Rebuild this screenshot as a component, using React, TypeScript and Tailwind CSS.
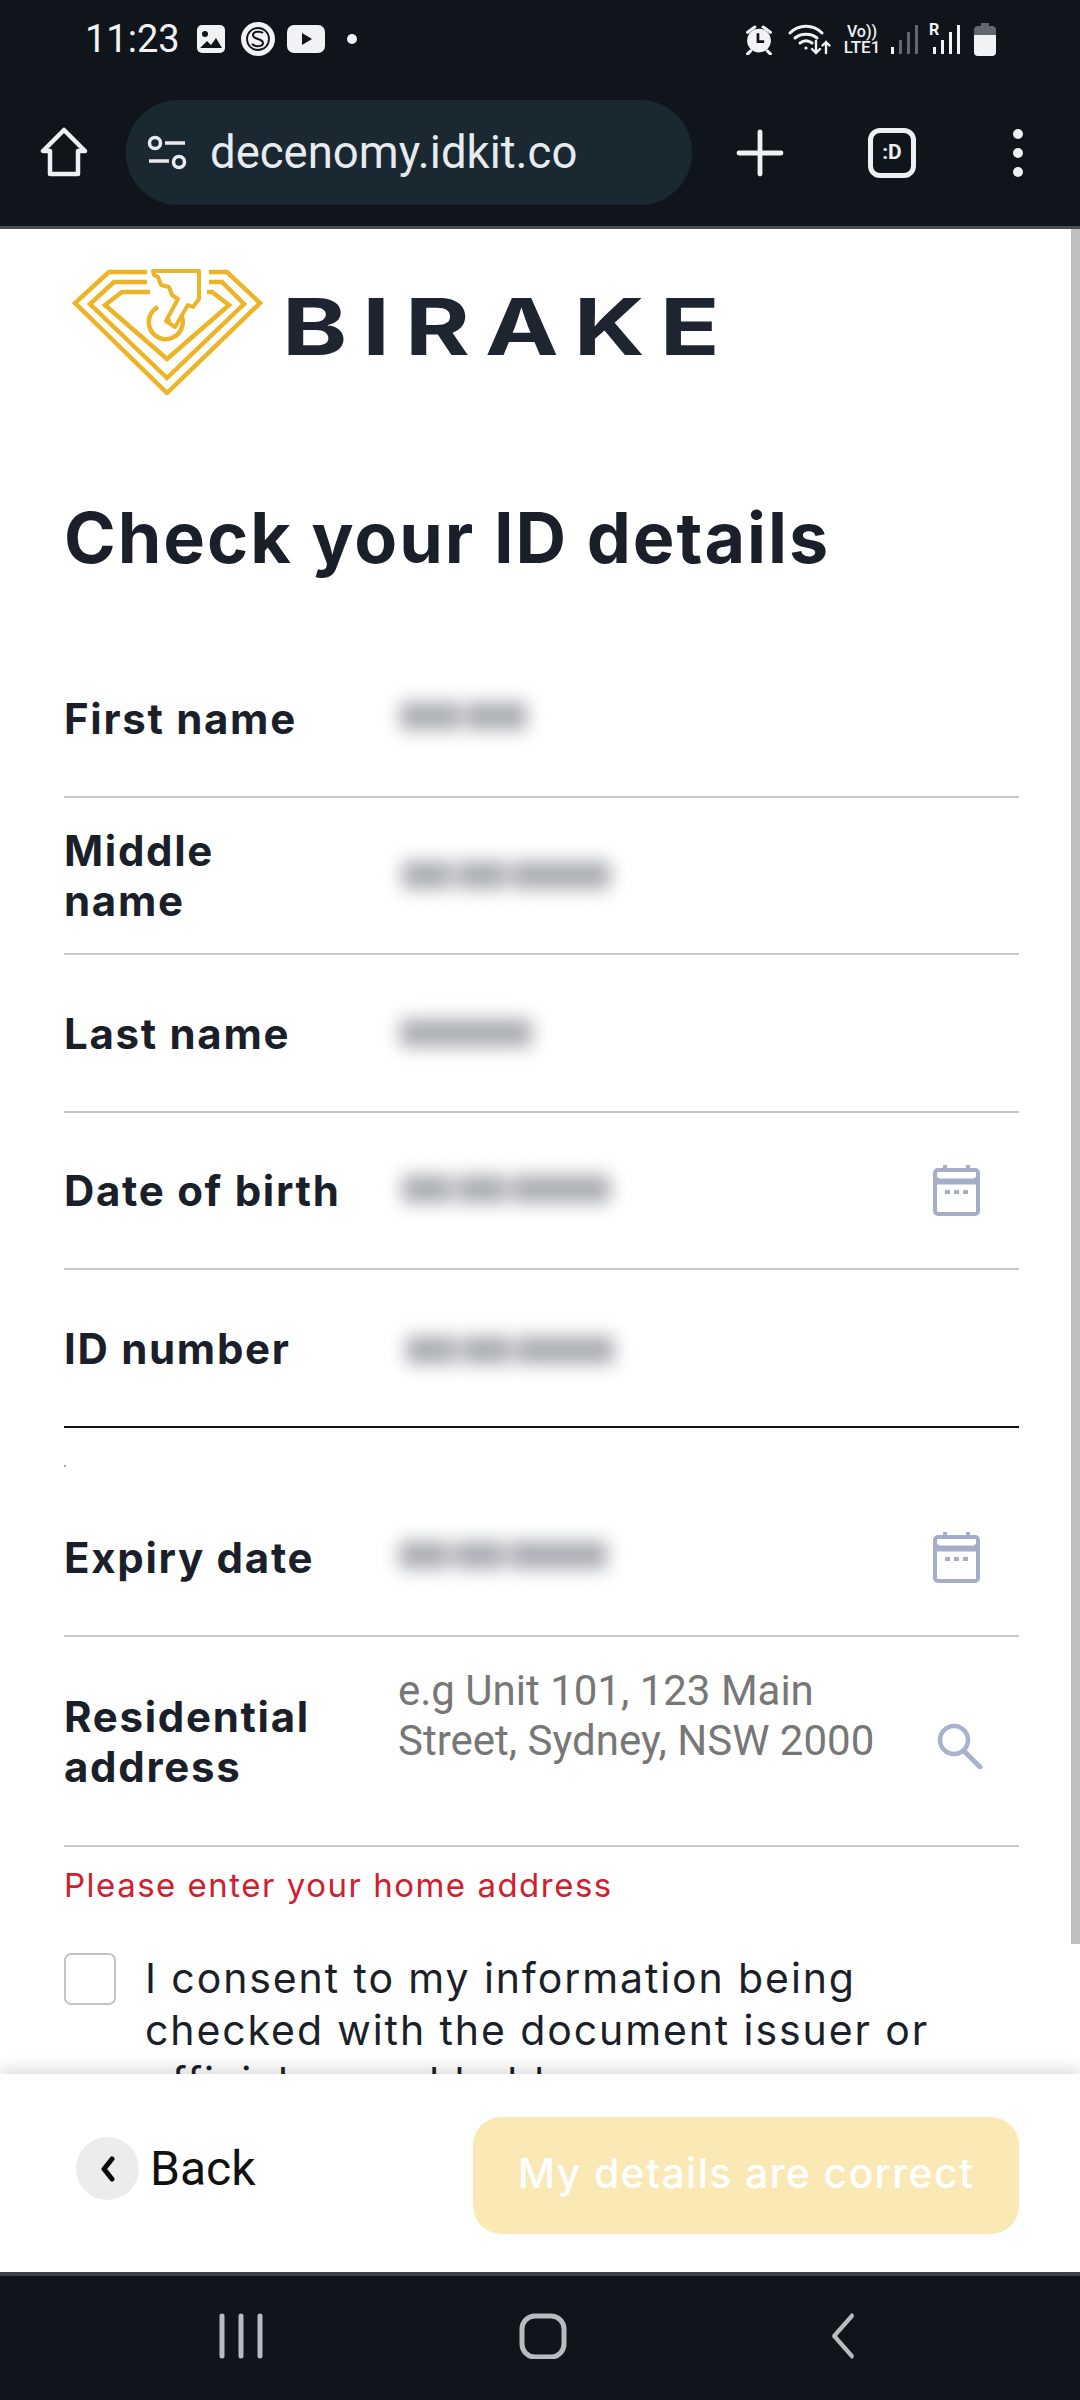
import React from "react";
import { Plus } from "lucide-react";

const labelClass =
  "mt-[2px] font-['Inter',sans-serif] font-bold text-[42px] leading-[50px] tracking-[1.7px] text-[#1a1f29]";

const StatusIcons: React.FC = () => (
  <div className="flex items-center">
    {/* alarm */}
    <svg className="-ml-[2px]" width="32" height="31" viewBox="0 0 30 30" fill="#f1f2f3">
      <circle cx="15" cy="16" r="11.5" />
      <path d="M11 3 4 8M19 3l7 5M7 26l-3 3M23 26l3 3" stroke="#f1f2f3" strokeWidth="3" strokeLinecap="round" />
      <path d="M14 9v8h6" fill="none" stroke="#10151b" strokeWidth="2.6" />
    </svg>
    {/* wifi */}
    <svg className="ml-[13px]" width="43" height="32" viewBox="0 0 43 32" fill="none" stroke="#f1f2f3" strokeWidth="3" strokeLinecap="round">
      <path d="M2 10C11 1 25 1 34 10" />
      <path d="M7 15c6-5 16-5 22 0" />
      <path d="M12 20c4-3 8-3 12 0" />
      <circle cx="18" cy="25" r="1.6" fill="#f1f2f3" stroke="none" />
      <path d="M28 18v12m-4-4 4 4 4-4M38 30V19m-3.500 3.500L38 19l3.500 3.500" strokeWidth="2.400" />
    </svg>
    <div className="ml-[11px] flex w-[40px] flex-col items-center font-['Roboto',sans-serif] font-medium text-[#f1f2f3]">
      <span className="text-[16px] leading-[15px]">Vo))</span>
      <span className="text-[17px] leading-[16px]">LTE1</span>
    </div>
    <div className="ml-[9px] flex h-[30px] items-end gap-[5px]">
      <div className="h-[7px] w-[3px] bg-[#f1f2f3]" />
      <div className="h-[14px] w-[3px] bg-[#62676c]" />
      <div className="h-[22px] w-[3px] bg-[#62676c]" />
      <div className="h-[29px] w-[3px] bg-[#62676c]" />
    </div>
    <div className="relative ml-[11px] flex h-[30px] w-[31px] items-end justify-end gap-[5px]">
      <span className="absolute left-0 top-[-3px] font-['Roboto',sans-serif] text-[16px] font-bold leading-[18px] text-[#f1f2f3]">R</span>
      <div className="h-[7px] w-[3px] bg-[#f1f2f3]" />
      <div className="h-[14px] w-[3px] bg-[#f1f2f3]" />
      <div className="h-[22px] w-[3px] bg-[#f1f2f3]" />
      <div className="h-[29px] w-[3px] bg-[#f1f2f3]" />
    </div>
    {/* battery */}
    <svg className="ml-[14px]" width="22" height="33" viewBox="0 0 22 33">
      <path d="M7 0h8v3h3a4 4 0 0 1 4 4v5H0V7a4 4 0 0 1 4-4h3z" fill="#62676c" />
      <path d="M0 12h22v17a4 4 0 0 1-4 4H4a4 4 0 0 1-4-4z" fill="#f1f2f3" />
    </svg>
  </div>
);

const StatusBar: React.FC = () => (
  <div className="flex h-[78px] items-center justify-between pl-[85px] pr-[84px]">
    <div className="flex items-center">
      <span className="font-['Roboto',sans-serif] text-[38px] leading-[40px] text-[#f1f2f3]">11:23</span>
      <svg className="ml-[17px]" width="28" height="28" viewBox="0 0 28 28">
        <rect width="28" height="28" rx="5" fill="#f1f2f3" />
        <circle cx="8" cy="9" r="3" fill="#10151b" />
        <path d="m3 23 7-7 4 4 5-7 6 10z" fill="#10151b" />
      </svg>
      <svg className="ml-[16px]" width="34" height="34" viewBox="0 0 34 34">
        <circle cx="17" cy="17" r="17" fill="#f1f2f3" />
        <circle cx="17" cy="17" r="11" fill="none" stroke="#10151b" strokeWidth="1.800" />
        <path d="M22 11c-2-2-10-2-10 2 0 5 10 3 10 8 0 4-8 4-11 1" fill="none" stroke="#10151b" strokeWidth="2" />
      </svg>
      <svg className="ml-[12px]" width="38" height="28" viewBox="0 0 38 28">
        <rect width="38" height="28" rx="7" fill="#f1f2f3" />
        <path d="M15 8v12l10-6z" fill="#10151b" />
      </svg>
      <div className="ml-[22px] h-[10px] w-[10px] rounded-full bg-[#f1f2f3]" />
    </div>
    <StatusIcons />
  </div>
);

const Toolbar: React.FC = () => (
  <div className="flex h-[148px] items-start pl-[40px] pt-[22px]">
    <svg className="mt-[27px]" width="48" height="50" viewBox="0 0 48 50" fill="none" stroke="#eef0f1" strokeWidth="4.500" strokeLinejoin="round">
      <path d="M24 3 3 24h7v23h28V24h7z" />
    </svg>
    <div className="ml-[38px] flex h-[105px] w-[566px] items-center rounded-[52px] bg-[#1a2832] pl-[21px]">
      <svg width="42" height="36" viewBox="0 0 42 36" fill="none" stroke="#e8ecee" strokeWidth="3.500">
        <circle cx="8" cy="8" r="5.500" />
        <path d="M18 8h20M2 26h20" />
        <circle cx="32" cy="27" r="5.500" />
      </svg>
      <span className="ml-[21px] font-['Roboto',sans-serif] text-[45.5px] leading-[54px] text-[#e6ebee]">decenomy.idkit.co</span>
    </div>
    <Plus className="ml-[32px] mt-[17px]" size={72} color="#eef0f1" strokeWidth={1.6} />
    <div className="ml-[72px] mt-[28px] flex h-[50px] w-[48px] items-center justify-center rounded-[12px] border-[5px] border-[#eef0f1] font-['Roboto',sans-serif] text-[21px] font-bold text-[#eef0f1]">
      :D
    </div>
    <div className="ml-[97px] mt-[29px] flex flex-col gap-[9px]">
      <div className="h-[10px] w-[10px] rounded-full bg-[#eef0f1]" />
      <div className="h-[10px] w-[10px] rounded-full bg-[#eef0f1]" />
      <div className="h-[10px] w-[10px] rounded-full bg-[#eef0f1]" />
    </div>
  </div>
);

const Logo: React.FC = () => (
  <div className="flex items-start pl-[72px] pt-[38px]">
    <svg width="192" height="128" viewBox="72 267 192 128" fill="none" stroke="#edb526" strokeWidth="4.500" strokeLinejoin="miter">
      <path d="M147 272h-38l-34 31 92 90 93-90-33-31h-18" />
      <path d="M147 282h-33l-24 22 77 74 77-74-22-22h-13" />
      <path d="M150 292h-28l-17 13 62 54 62-54-17-13h-5" />
      <path d="M153 271h46v28l-6 8-5-2-13 22-9-6 12-22-6-4-3-8-8-2-3-8-4-2z" strokeWidth="4" strokeLinejoin="round" />
      <path d="M158 307a17 17 0 1 0 24 10" strokeWidth="4.500" />
      <circle cx="168" cy="321" r="3" fill="#edb526" stroke="none" />
    </svg>
    <span className="ml-[18px] mt-[19px] origin-left scale-x-[1.25] font-['Inter',sans-serif] text-[79px] font-bold leading-[80px] tracking-[12px] text-[#1e2430]">
      BIRAKE
    </span>
  </div>
);

const BlurBars: React.FC<{ segments: number[]; className: string }> = ({ segments, className }) => (
  <div className={`flex h-[28px] gap-[5px] blur-[9px] ${className}`}>
    {segments.map((width, i) => (
      <div key={i} className="h-full bg-[#a9adb2]" style={{ width }} />
    ))}
  </div>
);

const CalendarIcon: React.FC = () => (
  <svg className="ml-auto mr-[39px]" width="47" height="52" viewBox="0 0 47 52" fill="none" stroke="#a6adc8" strokeWidth="4">
    <rect x="2" y="6" width="43" height="44" rx="3" />
    <path d="M2 17h43" strokeWidth="7" stroke="#a6adc8" />
    <path d="M12 1v6M35 1v6" strokeWidth="4" />
    <path d="M6 13h35" stroke="#ffffff" strokeWidth="3" />
    <path d="M12 28h5M21 28h5M30 28h5" strokeWidth="4" />
  </svg>
);

const Row: React.FC<{ label: React.ReactNode; dark?: boolean; children?: React.ReactNode }> = ({ label, dark, children }) => (
  <div
    className={`flex h-[157.5px] items-center border-b-2 ${dark ? "border-[#111111]" : "border-[#c8c8c8]"}`}
  >
    <div className={`w-[334px] shrink-0 ${labelClass}`}>{label}</div>
    {children}
  </div>
);

const Form: React.FC = () => (
  <div className="mt-[62px] pl-[64px] pr-[61px]">
    <Row label="First name">
      <BlurBars segments={[60, 62]} className="-mt-[3px] ml-[2px]" />
    </Row>
    <Row label={<>Middle<br />name</>}>
      <BlurBars segments={[50, 50, 98]} className="ml-[4px]" />
    </Row>
    <Row label="Last name">
      <BlurBars segments={[132]} className="ml-[2px]" />
    </Row>
    <Row label="Date of birth">
      <BlurBars segments={[50, 50, 98]} className="-mt-[3px] ml-[4px]" />
      <CalendarIcon />
    </Row>
    <Row label="ID number" dark>
      <BlurBars segments={[50, 50, 98]} className="ml-[8px] mt-[5px]" />
    </Row>

    <div className="h-[52px] pt-[37px]">
      <div className="h-[2px] w-[2px] bg-[#9ca3af]" />
    </div>
    <div className="flex h-[157.5px] items-center border-b-2 border-[#c8c8c8]">
      <div className={`w-[334px] shrink-0 ${labelClass}`}>Expiry date</div>
      <BlurBars segments={[50, 50, 98]} className="-mt-[4px] ml-[1px]" />
      <CalendarIcon />
    </div>

    <div className="flex h-[210px] items-center border-b-2 border-[#c8c8c8]">
      <div className={`w-[334px] shrink-0 ${labelClass}`}>
        Residential
        <br />
        address
      </div>
      <div className="-mt-[50px] font-['Roboto',sans-serif] text-[42px] leading-[50px] text-[#777777]">
        e.g Unit 101, 123 Main
        <br />
        Street, Sydney, NSW 2000
      </div>
      <svg className="ml-auto mr-[36px] mt-[10px]" width="46" height="46" viewBox="0 0 46 46" fill="none" stroke="#a9b1cf" strokeWidth="4.500" strokeLinecap="round">
        <circle cx="17" cy="17" r="14" />
        <path d="m27 28 16 16" strokeWidth="5" />
      </svg>
    </div>

    <p className="mt-[17px] font-['Inter',sans-serif] text-[33px] leading-[42px] tracking-[1.5px] text-[#d0202e]">
      Please enter your home address
    </p>

    <div className="mt-[47px] flex items-start">
      <div className="h-[52px] w-[52px] shrink-0 rounded-[7px] border-2 border-[#c4c4c4]" />
      <p className="ml-[29px] -mt-[1px] font-['Inter',sans-serif] text-[41px] font-normal leading-[52px] tracking-[1.9px] text-[#1a1f29]">
        I consent to my information being
        <br />
        checked with the document issuer or
        <br />
        official record holder
      </p>
    </div>
  </div>
);

const Footer: React.FC = () => (
  <div className="relative z-10 flex h-[198px] items-start bg-white pl-[76px] pr-[61px] shadow-[0_-6px_14px_rgba(0,0,0,0.13)]">
    <div className="mt-[63px] flex items-center">
      <div className="flex h-[63px] w-[63px] items-center justify-center rounded-full bg-[#ececec]">
        <svg width="18" height="26" viewBox="0 0 18 26" fill="none" stroke="#0b0b0b" strokeWidth="5" strokeLinecap="round" strokeLinejoin="round">
          <path d="M13 3 5 13l8 10" />
        </svg>
      </div>
      <span className="ml-[11px] font-['Roboto',sans-serif] text-[48px] leading-[54px] text-[#111111]">Back</span>
    </div>
    <div className="ml-auto mt-[43px] flex h-[117px] w-[546px] items-center justify-center rounded-[28px] bg-[#fbe9b5] pb-[4px] font-['Inter',sans-serif] text-[41px] font-medium tracking-[1.3px] text-white">
      My details are correct
    </div>
  </div>
);

const NavBar: React.FC = () => (
  <div className="flex h-[128px] items-start justify-center gap-[252px] border-t-4 border-[#3f4449] bg-[#10151b] pl-[6px] pt-[37px]">
    <svg width="50" height="46" viewBox="0 0 50 46" fill="none" stroke="#b9bcbf" strokeWidth="5" strokeLinecap="round">
      <path d="M6 3v40M25 3v40M44 3v40" />
    </svg>
    <svg width="50" height="46" viewBox="0 0 50 46" fill="none" stroke="#b9bcbf" strokeWidth="5">
      <rect x="4" y="3" width="42" height="41" rx="13" />
    </svg>
    <svg width="50" height="46" viewBox="0 0 50 46" fill="none" stroke="#b9bcbf" strokeWidth="5" strokeLinecap="round" strokeLinejoin="round">
      <path d="M36 3 14 23l22 20" transform="translate(3 0) scale(0.8 1)" />
    </svg>
  </div>
);

const App: React.FC = () => {
  return (
    <div className="flex h-[2400px] w-[1080px] flex-col overflow-hidden bg-white">
      <div className="shrink-0 border-b-[3px] border-[#4a4f54] bg-[#10151b]">
        <StatusBar />
        <Toolbar />
      </div>
      <main className="relative min-h-0 flex-1 overflow-hidden">
        <Logo />
        <h1 className="mt-[103px] pl-[64px] font-['Inter',sans-serif] text-[70px] font-bold leading-[80px] tracking-[2px] text-[#1a1f29]">
          Check your ID details
        </h1>
        <Form />
        {/* scrollbar thumb */}
        <div className="absolute right-0 top-0 h-[1715px] w-[9px] bg-[#c0c0c0]" />
      </main>
      <Footer />
      <NavBar />
    </div>
  );
};

export default App;
